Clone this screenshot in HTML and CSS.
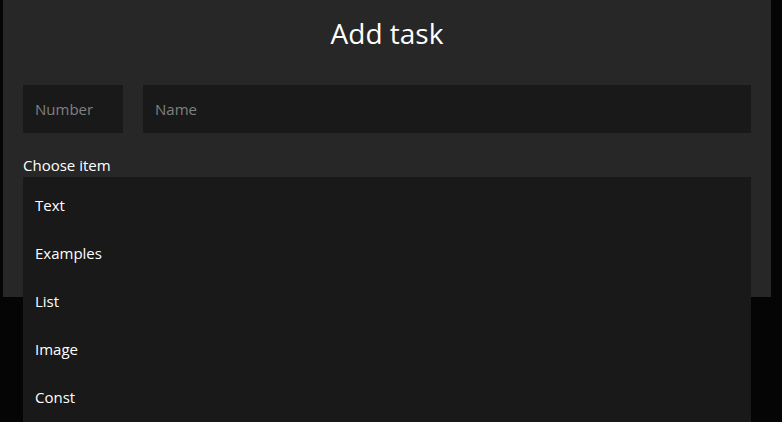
FILE: index.html
```html
<!DOCTYPE html>
<html lang="en">
<head>
<meta charset="utf-8">
<title>Add task</title>
<link rel="stylesheet" href="styles.css">
</head>
<body>
<div class="dialog">
  <h1 class="title">Add task</h1>
  <div class="fields">
    <input class="field field-number" type="text" placeholder="Number">
    <input class="field field-name" type="text" placeholder="Name">
  </div>
  <div class="label">Choose item</div>
  <ul class="dropdown">
    <li class="option">Text</li>
    <li class="option">Examples</li>
    <li class="option">List</li>
    <li class="option">Image</li>
    <li class="option">Const</li>
  </ul>
</div>
</body>
</html>
```
FILE: styles.css
```css
html, body {
  margin: 0;
  padding: 0;
  height: 100%;
  overflow: hidden;
}
body {
  background: #050505;
  font-family: "Open Sans", "Noto Sans", sans-serif;
  color: #ffffff;
  padding-left: 3px;
}
.dialog {
  width: 768px;
  height: 297px;
  background: #272727;
  box-sizing: border-box;
  padding: 0 20px;
}
.title {
  margin: 0;
  height: 85px;
  box-sizing: border-box;
  padding-top: 13px;
  text-align: center;
  font-weight: 400;
  font-size: 28px;
  line-height: 40px;
  color: #ffffff;
}
.fields {
  display: flex;
  gap: 20px;
}
.field {
  height: 48px;
  box-sizing: border-box;
  border: none;
  outline: none;
  background: #191919;
  color: #ffffff;
  font-family: inherit;
  font-size: 15px;
  padding: 0 12px;
  margin: 0;
}
.field::placeholder {
  color: #808080;
}
.field-number {
  width: 100px;
}
.field-name {
  flex: 1;
  min-width: 0;
}
.label {
  margin-top: 22px;
  height: 22px;
  font-size: 15px;
  line-height: 20px;
  color: #ffffff;
}
.dropdown {
  list-style: none;
  margin: 0;
  padding: 4px 0;
  background: #191919;
  height: 248px;
  box-sizing: border-box;
}
.option {
  height: 48px;
  line-height: 48px;
  padding: 0 12px;
  font-size: 15px;
  color: #ffffff;
}
```
